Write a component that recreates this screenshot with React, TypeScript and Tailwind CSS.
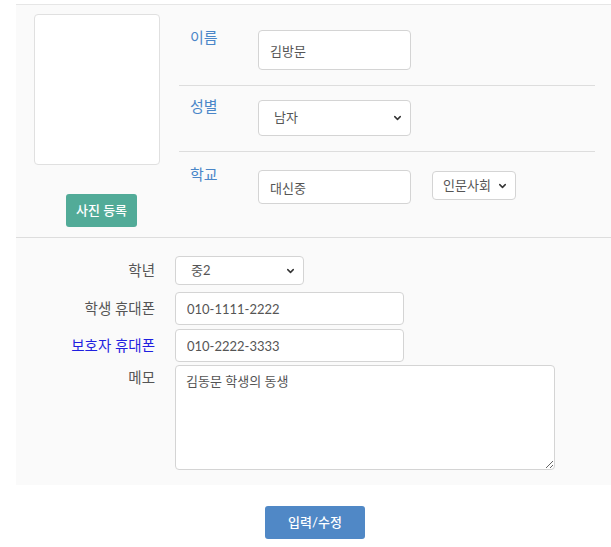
import { ChevronDown } from 'lucide-react';

const font = "font-['Lato','Noto_Sans_CJK_KR',sans-serif]";

function Select({ value, className, textClass }: { value: string; className: string; textClass: string }) {
  return (
    <div className={`relative ${className}`}>
      <select
        defaultValue={value}
        className={`h-full w-full appearance-none rounded-[4px] border border-[#d4d4d4] bg-white text-[13px] text-[#555] outline-none ${textClass}`}
      >
        <option>{value}</option>
      </select>
      <ChevronDown className="pointer-events-none absolute right-[8px] top-1/2 h-[11px] w-[11px] -translate-y-1/2 text-[#333]" strokeWidth={3.2} />
    </div>
  );
}

function TextInput({ value, className }: { value: string; className: string }) {
  return (
    <input
      defaultValue={value}
      className={`rounded-[4px] border border-[#d4d4d4] bg-white px-[11px] text-[13px] text-[#555] outline-none ${className}`}
    />
  );
}

export default function App() {
  return (
    <div className={`min-h-screen bg-white pt-1 ${font}`}>
      <div className="ml-4 border-t border-[#e6e6e6] bg-[#fafafa]">
        <div className="flex h-[232px]">
          <div className="w-[163px]">
            <div className="ml-[18px] mt-[9px] h-[151px] w-[126px] rounded-[4px] border border-[#e0e0e0] bg-white" />
            <button
              type="button"
              className="ml-[50px] mt-[29px] h-[33px] w-[71px] rounded-[3px] bg-[#52ab98] text-[13px] font-medium text-white"
            >
              사진 등록
            </button>
          </div>

          <div className="w-[416px]">
            <div className="flex h-[81px] items-start border-b border-[#dddddd]">
              <div className="mt-[22px] w-[79px] pl-[11px] text-[15px] leading-[20px] text-[#4a86c8]">이름</div>
              <TextInput value="김방문" className="mt-[25px] h-[40px] w-[153px]" />
            </div>
            <div className="flex h-[66px] items-start border-b border-[#dddddd]">
              <div className="mt-[10px] w-[79px] pl-[11px] text-[15px] leading-[20px] text-[#4a86c8]">성별</div>
              <Select value="남자" className="mt-[14px] h-[36px] w-[153px]" textClass="pl-[15px]" />
            </div>
            <div className="flex items-start">
              <div className="mt-[12px] w-[79px] pl-[11px] text-[15px] leading-[20px] text-[#4a86c8]">학교</div>
              <TextInput value="대신중" className="mt-[18px] h-[34px] w-[153px]" />
              <Select value="인문사회" className="ml-[21px] mt-[19px] h-[29px] w-[84px]" textClass="pl-[10px]" />
            </div>
          </div>
        </div>

        <div className="grid grid-cols-[139px_1fr] gap-x-[20px] border-t border-[#dddddd] pb-[15px] pt-[18px] text-[14.5px] text-[#555]">
          <div className="flex h-[29px] items-center justify-end">학년</div>
          <Select value="중2" className="h-[29px] w-[129px]" textClass="pl-[15px]" />

          <div className="mt-[7px] flex h-[33px] items-center justify-end">학생 휴대폰</div>
          <TextInput value="010-1111-2222" className="mt-[7px] h-[33px] w-[229px]" />

          <div className="mt-[4px] flex h-[33px] items-center justify-end text-[#1f1fe0]">보호자 휴대폰</div>
          <TextInput value="010-2222-3333" className="mt-[4px] h-[33px] w-[229px]" />

          <div className="mt-[6px] text-right leading-[20px]">메모</div>
          <textarea
            defaultValue="김동문 학생의 동생"
            className="mt-[3px] h-[105px] w-[380px] rounded-[4px] border border-[#d4d4d4] bg-white px-[10px] py-[6px] text-[13px] text-[#555] outline-none"
          />
        </div>
      </div>

      <div className="ml-4 flex justify-center pt-[21px]">
        <button
          type="button"
          className="ml-[3px] h-[33px] w-[100px] rounded-[3px] bg-[#5088c6] text-[13px] font-medium text-white"
        >
          입력/수정
        </button>
      </div>
    </div>
  );
}
